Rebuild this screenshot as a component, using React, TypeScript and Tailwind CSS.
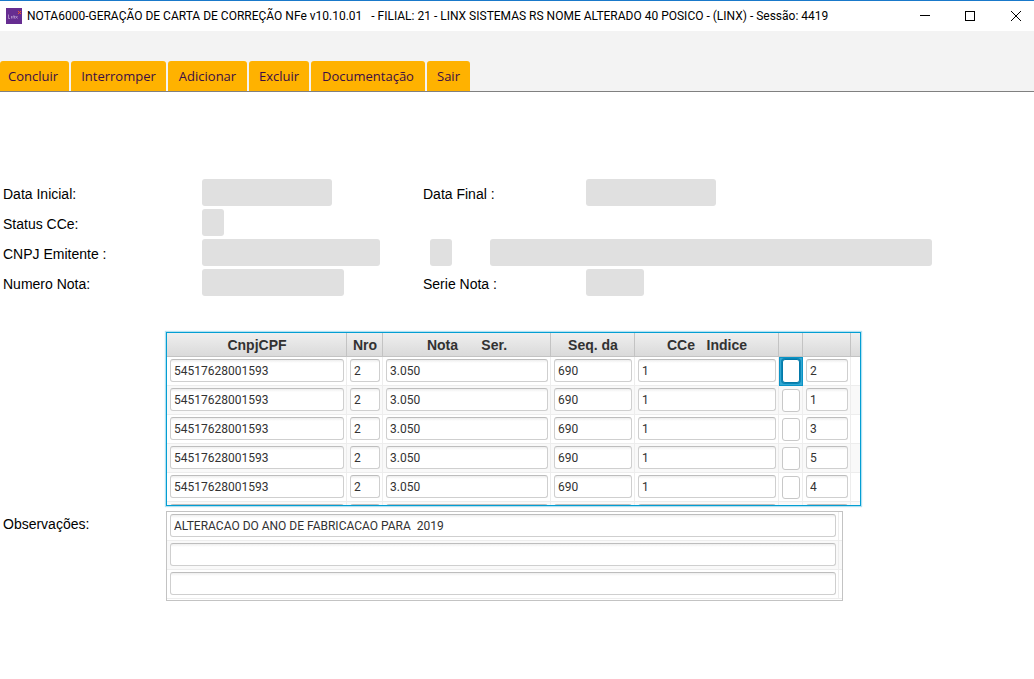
import type { ReactNode } from "react";

const tabs = [
  { label: "Concluir", width: "w-[69px] pr-[3px]" },
  { label: "Interromper", width: "w-[95px]" },
  { label: "Adicionar", width: "w-[79px]" },
  { label: "Excluir", width: "w-[60px]" },
  { label: "Documentação", width: "w-[114px]" },
  { label: "Sair", width: "w-[43px]" },
];

const rows = ["2", "1", "3", "5", "4", ""];

const cellInput =
  "block h-[23px] w-full rounded-[3px] border border-[#cfcfcf] border-t-[#bdbdbd] bg-white bg-linear-to-b from-[#eeeeee] to-white to-[3px] px-[3px] text-[12px] text-[#323232] outline-none";

const columns = ["CnpjCPF", "Nro", "Nota      Ser.", "Seq. da", "CCe   Indice", "", "", ""];
const widths = [
  "w-[180px]",
  "w-[36px]",
  "w-[168px]",
  "w-[84px]",
  "w-[144px]",
  "w-[24px]",
  "w-[48px]",
  "w-[9px]",
];

function Label({ id, children }: { id: string; children: ReactNode }) {
  return (
    <label htmlFor={id} className="pt-[3px] whitespace-nowrap">
      {children}
    </label>
  );
}

function Field({ id, size, label }: { id: string; size: string; label?: string }) {
  return (
    <input
      id={id}
      aria-label={label}
      readOnly
      className={`h-[27px] rounded-[3px] bg-[#e0e0e0] px-2 outline-none ${size}`}
    />
  );
}

function Cell({ value, label }: { value: string; label: string }) {
  return (
    <td className="border-r border-b border-[#ededed] pt-[2px] pr-[2px] pl-[3px] align-top">
      <input className={cellInput} defaultValue={value} aria-label={label} />
    </td>
  );
}

export default function App() {
  return (
    <div className="min-h-screen bg-white font-['Liberation_Sans',sans-serif] text-[14px] text-black">
      <header className="flex h-[31px] items-center border-t border-[#1979ca] bg-white font-['Roboto',sans-serif] text-[12px]">
        <svg className="ml-[6px] size-4 shrink-0" viewBox="0 0 16 16" aria-hidden="true">
          <rect width="16" height="16" fill="#662d91" />
          <path
            d="M2.500 6.500v4h1.500M5.500 8v2.500M7 10.500V8h1.500v2.500M9.500 10.500l2-2.500M9.500 8l2 2.500"
            fill="none"
            stroke="#b99bd0"
            strokeWidth=".8"
          />
          <path d="M12 3l3 3M15 3l-3 3" stroke="#f0592a" strokeWidth="1" />
        </svg>
        <h1 className="ml-[5px] grow whitespace-pre">
          NOTA6000-GERAÇÃO DE CARTA DE CORREÇÃO NFe v10.10.01   - FILIAL: 21 - LINX SISTEMAS RS NOME
          ALTERADO 40 POSICO - (LINX) - Sessão: 4419
        </h1>
        <button aria-label="Minimizar" className="flex w-[34px] justify-center">
          <svg width="10" height="10" viewBox="0 0 10 10" shapeRendering="crispEdges">
            <path d="M0 4.500h10" stroke="#000" />
          </svg>
        </button>
        <button aria-label="Maximizar" className="flex w-[56px] justify-center">
          <svg width="10" height="10" viewBox="0 0 10 10" shapeRendering="crispEdges">
            <rect x=".5" y=".5" width="9" height="9" fill="none" stroke="#000" />
          </svg>
        </button>
        <button aria-label="Fechar" className="flex w-[36px] justify-center">
          <svg width="10" height="10" viewBox="0 0 10 10">
            <path d="M0 0l10 10M10 0L0 10" stroke="#000" />
          </svg>
        </button>
      </header>

      <nav className="flex h-[61px] items-end gap-[2px] border-b border-[#808080] bg-[#f3f3f3] font-['Open_Sans',sans-serif] text-[13px] text-[#3b0d45]">
        {tabs.map((tab) => (
          <button
            key={tab.label}
            className={`h-[30px] rounded-t-[3px] bg-[#ffb200] pt-[2px] text-center ${tab.width}`}
          >
            {tab.label}
          </button>
        ))}
      </nav>

      <main className="pl-[3px]">
        <form className="grid grid-cols-[199px_221px_163px_1fr] items-center gap-y-[3px] pt-[87px]">
          <Label id="inicial">Data Inicial:</Label>
          <Field id="inicial" size="w-[130px]" />
          <Label id="final">Data Final :</Label>
          <Field id="final" size="w-[130px]" />

          <Label id="status">Status CCe:</Label>
          <div className="col-span-3 flex">
            <Field id="status" size="w-[22px]" />
          </div>

          <Label id="cnpj">CNPJ Emitente :</Label>
          <Field id="cnpj" size="w-[178px]" />
          <div className="col-span-2 flex gap-[38px] pr-[102px] pl-[7px]">
            <Field id="filial" label="Filial do emitente" size="w-[22px] shrink-0" />
            <Field id="nome" label="Nome do emitente" size="min-w-0 grow" />
          </div>

          <Label id="numero">Numero Nota:</Label>
          <Field id="numero" size="w-[142px]" />
          <Label id="serie">Serie Nota :</Label>
          <Field id="serie" size="w-[58px]" />
        </form>

        <section className="mt-9 ml-[163px] h-[174px] w-fit overflow-hidden border border-[#039ed3] shadow-[0_0_1px_1px_#b3e1f1]">
          <table className="w-[693px] table-fixed border-separate border-spacing-0 font-['Roboto',sans-serif]">
            <thead>
              <tr className="h-6 bg-linear-to-b from-[#efefef] to-[#d9d9d9] font-['Liberation_Sans',sans-serif]">
                {columns.map((name, i) => (
                  <th
                    key={i}
                    className={`border-b border-[#c3c3c3] p-0 pl-px text-center text-[14px] leading-5 font-bold whitespace-pre text-[#323232] not-last:border-r ${widths[i]}`}
                  >
                    {name}
                  </th>
                ))}
              </tr>
            </thead>
            <tbody>
              {rows.map((indice, i) => (
                <tr key={i} className="h-[29px] even:bg-[#f9f9f9]">
                  <Cell value={indice && "54517628001593"} label="CnpjCPF" />
                  <Cell value={indice && "2"} label="Nro" />
                  <Cell value={indice && "3.050"} label="Nota" />
                  <Cell value={indice && "690"} label="Seq. da CCe" />
                  <Cell value={indice && "1"} label="Indice" />
                  <td
                    className={
                      i === 0
                        ? "border border-[#0a93c6] bg-[#33a8d3] pt-px pl-[2px] align-top"
                        : "border-r border-b border-[#ededed] pt-[3px] pl-[3px] align-top"
                    }
                  >
                    <input
                      type="checkbox"
                      aria-label="Selecionar"
                      className={`block w-[18px] appearance-none rounded-[3px] border bg-white ${
                        i === 0
                          ? "h-[24px] border-[#0479a8] shadow-[0_0_0_1px_#0a86b5]"
                          : "h-[23px] border-[#c8c8c8]"
                      }`}
                    />
                  </td>
                  <Cell value={indice} label="Item" />
                  <td className="border-b border-[#ededed] p-0" />
                </tr>
              ))}
            </tbody>
          </table>
        </section>

        <section className="mt-[5px] flex">
          <label htmlFor="obs0" className="w-[163px] pt-[3px]">
            Observações:
          </label>
          <div className="w-[677px] border border-[#c3c3c3] font-['Roboto',sans-serif]">
            {["ALTERACAO DO ANO DE FABRICACAO PARA  2019", "", ""].map((line, i) => (
              <div key={i} className="flex h-[29px] border-b border-[#ededed] last:mb-px even:bg-[#f9f9f9]">
                <div className="grow border-r border-[#ededed] pt-[2px] pr-[2px] pl-[3px]">
                  <input id={`obs${i}`} aria-label="Observações" className={cellInput} defaultValue={line} />
                </div>
                <div className="w-[3px]" />
              </div>
            ))}
          </div>
        </section>
      </main>
    </div>
  );
}
